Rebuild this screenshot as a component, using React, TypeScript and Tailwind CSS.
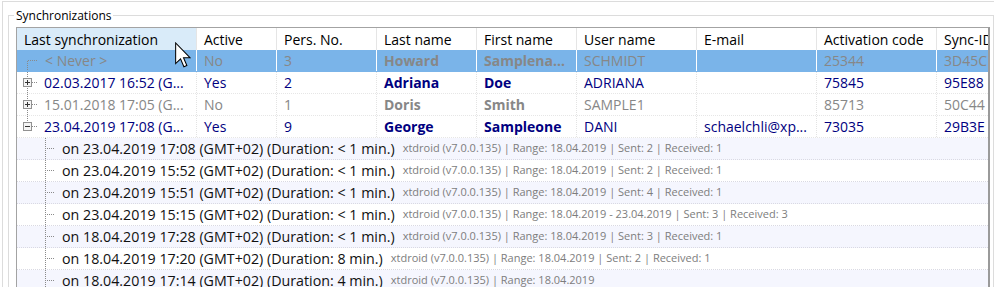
import React from "react";

type Tree = "first" | "plus" | "minus";
type MainRow = {
  tree: Tree;
  date: string;
  active: string;
  pers: string;
  last: string;
  first: string;
  user: string;
  email: string;
  code: string;
  sync: string;
  tone: "sel" | "navy" | "gray";
};

const rows: MainRow[] = [
  { tree: "first", date: "< Never >", active: "No", pers: "3", last: "Howard", first: "Samplena...", user: "SCHMIDT", email: "", code: "25344", sync: "3D45C", tone: "sel" },
  { tree: "plus", date: "02.03.2017 16:52 (G...", active: "Yes", pers: "2", last: "Adriana", first: "Doe", user: "ADRIANA", email: "", code: "75845", sync: "95E88", tone: "navy" },
  { tree: "plus", date: "15.01.2018 17:05 (G...", active: "No", pers: "1", last: "Doris", first: "Smith", user: "SAMPLE1", email: "", code: "85713", sync: "50C44", tone: "gray" },
  { tree: "minus", date: "23.04.2019 17:08 (G...", active: "Yes", pers: "9", last: "George", first: "Sampleone", user: "DANI", email: "schaelchli@xp...", code: "73035", sync: "29B3E", tone: "navy" },
];

const subs: [string, string][] = [
  ["on 23.04.2019 17:08 (GMT+02) (Duration: < 1 min.)", "xtdroid (v7.0.0.135) | Range: 18.04.2019 | Sent: 2 | Received: 1"],
  ["on 23.04.2019 15:52 (GMT+02) (Duration: < 1 min.)", "xtdroid (v7.0.0.135) | Range: 18.04.2019 | Sent: 2 | Received: 1"],
  ["on 23.04.2019 15:51 (GMT+02) (Duration: < 1 min.)", "xtdroid (v7.0.0.135) | Range: 18.04.2019 | Sent: 4 | Received: 1"],
  ["on 23.04.2019 15:15 (GMT+02) (Duration: < 1 min.)", "xtdroid (v7.0.0.135) | Range: 18.04.2019 - 23.04.2019 | Sent: 3 | Received: 3"],
  ["on 18.04.2019 17:28 (GMT+02) (Duration: < 1 min.)", "xtdroid (v7.0.0.135) | Range: 18.04.2019 | Sent: 3 | Received: 1"],
  ["on 18.04.2019 17:20 (GMT+02) (Duration: 8 min.)", "xtdroid (v7.0.0.135) | Range: 18.04.2019 | Sent: 2 | Received: 1"],
  ["on 18.04.2019 17:14 (GMT+02) (Duration: 4 min.)", "xtdroid (v7.0.0.135) | Range: 18.04.2019"],
];

const W = [
  "w-[180px]",
  "w-[80px]",
  "w-[100px]",
  "w-[100px]",
  "w-[100px]",
  "w-[120px]",
  "w-[120px]",
  "w-[120px]",
  "w-[51px]",
];

const headers = ["Last synchronization", "Active", "Pers. No.", "Last name", "First name", "User name", "E-mail", "Activation code", "Sync-ID"];

function TreeGlyph({ kind }: { kind: Tree }) {
  return (
    <svg width="27" height="21" className="shrink-0" shapeRendering="crispEdges">
      {kind === "first" && <line x1="10.5" y1="11" x2="10.5" y2="21" stroke="#8a8a8a" strokeDasharray="1 1" />}
      {kind === "plus" && <line x1="10.5" y1="0" x2="10.5" y2="21" stroke="#8a8a8a" strokeDasharray="1 1" />}
      {kind === "minus" && <line x1="10.5" y1="0" x2="10.5" y2="7" stroke="#8a8a8a" strokeDasharray="1 1" />}
      <line x1={kind === "first" ? 11 : 15} y1="10.5" x2="21" y2="10.5" stroke="#8a8a8a" strokeDasharray="1 1" />
      {kind !== "first" && (
        <g>
          <rect x="6.5" y="6.5" width="8" height="8" fill="#f4f4f4" stroke="#919191" />
          <line x1="8" y1="10.5" x2="13" y2="10.5" stroke="#333" />
          {kind === "plus" && <line x1="10.5" y1="8" x2="10.5" y2="13" stroke="#333" />}
        </g>
      )}
    </svg>
  );
}

function SubGlyph() {
  return (
    <svg width="45" height="21" className="shrink-0" shapeRendering="crispEdges">
      <line x1="28.5" y1="0" x2="28.5" y2="22" stroke="#8a8a8a" strokeDasharray="1 1" />
      <line x1="30" y1="10.5" x2="38" y2="10.5" stroke="#8a8a8a" strokeDasharray="1 1" />
    </svg>
  );
}

function Cursor() {
  return (
    <svg width="16" height="26" viewBox="0 0 12.4 19.6" className="absolute left-[175px] top-[42px]">
      <path
        d="M0.5 0.5 L0.5 16.5 L4.3 12.8 L6.9 18.9 L9.2 17.9 L6.6 11.9 L11.6 11.9 Z"
        fill="#fff"
        stroke="#000"
        strokeWidth="0.8"
        strokeLinejoin="miter"
      />
    </svg>
  );
}

export default function App() {
  const font = "font-['Open_Sans',sans-serif]";
  return (
    <div className={`relative w-[1000px] h-[287px] overflow-hidden bg-white ${font}`}>
      <div className="pt-[1px] pl-[2px]">
        <div className="w-[992px] h-[300px] border-l border-t border-[#dcdcdc] pt-[13px] pl-[5px]">
          {/* group box */}
          <div className="w-[986px] h-[290px] border border-[#dcdcdc]">
            <div className="-mt-[8px] ml-[5px] w-fit bg-white px-[2px] text-[12px] leading-[15px] text-black">
              Synchronizations
            </div>
            <div className="ml-[7px] mt-[4px] w-[974px] h-[280px] border-l border-t border-r-2 border-[#a3a3a3] border-r-[#9a9a9a] overflow-hidden text-[14px]">
              {/* header */}
              <div className="flex h-[22px] whitespace-nowrap text-black">
                {headers.map((h, i) => (
                  <div
                    key={h}
                    className={`${W[i]} shrink-0 overflow-hidden h-full flex items-center pl-[7px] ${i < 8 ? "border-r border-[#e5e5e5]" : ""} ${i === 0 ? "bg-[#d9ebf9]" : ""}`}
                  >
                    {h}
                  </div>
                ))}
              </div>
              {/* main rows */}
              {rows.map((r, ri) => {
                const sel = r.tone === "sel";
                const color = r.tone === "navy" ? "text-[#000080]" : "text-[#878787]";
                const sep = sel ? "border-r border-r-white" : "border-r border-dotted border-r-[#e3e3e3]";
                const vals = [r.active, r.pers, r.last, r.first, r.user, r.email, r.code, r.sync];
                return (
                  <div
                    key={ri}
                    className={`flex h-[22px] whitespace-nowrap border-b border-dotted ${sel ? "bg-[#7ab4e9] border-b-[#7ab4e9]" : "border-b-[#e6e6e6]"} ${color}`}
                  >
                    <div className={`${W[0]} shrink-0 overflow-hidden h-full flex items-center ${sep}`}>
                      <TreeGlyph kind={r.tree} />
                      <span className={sel ? "pl-[1px]" : ""}>{r.date}</span>
                    </div>
                    {vals.map((v, i) => (
                      <div
                        key={i}
                        className={`${W[i + 1]} shrink-0 overflow-hidden h-full flex items-center pl-[7px] ${i < 7 ? sep : ""} ${i === 2 || i === 3 ? "font-bold" : ""}`}
                      >
                        {v}
                      </div>
                    ))}
                  </div>
                );
              })}
              {/* detail rows */}
              {subs.map(([a, b], i) => (
                <div
                  key={i}
                  className={`flex items-center h-[22px] whitespace-nowrap border-b border-dotted border-b-[#d9d9e3] ${i % 2 === 0 ? "bg-[#f5f6fe]" : "bg-white"}`}
                >
                  <SubGlyph />
                  <span className="text-[14.25px] text-[#111]">{a}</span>
                  <span className="ml-[8px] text-[11px] text-[#7d7d7d]">{b}</span>
                </div>
              ))}
            </div>
          </div>
        </div>
      </div>
      <Cursor />
    </div>
  );
}
